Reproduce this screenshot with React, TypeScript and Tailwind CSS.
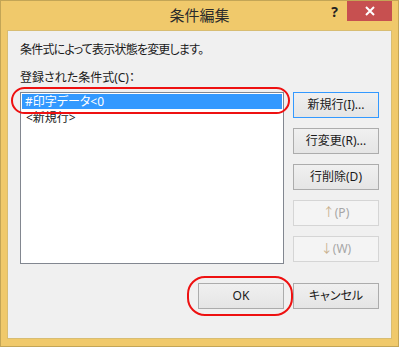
import React from "react";

const font = {
  fontFamily: '"Noto Sans", "Noto Sans CJK JP", sans-serif',
};

function Btn({
  children,
  focused,
  disabled,
  className = "",
}: {
  children: React.ReactNode;
  focused?: boolean;
  disabled?: boolean;
  className?: string;
}) {
  const border = focused
    ? "border-[#3399ff]"
    : disabled
    ? "border-[#d5d5d5]"
    : "border-[#acacac]";
  const bg = disabled
    ? "bg-[#f4f4f4]"
    : "bg-gradient-to-b from-[#f0f0f0] to-[#e5e5e5]";
  const color = disabled ? "text-[#a6a6a6]" : "text-[#1a1a1a]";
  return (
    <div
      className={`w-[86px] h-[26px] border ${border} ${bg} ${color} flex items-center justify-center text-[12px] leading-none ${className}`}
    >
      {children}
    </div>
  );
}

export default function App() {
  return (
    <div
      className="relative w-[399px] h-[347px] bg-[#f0c96b] border border-[#c3a556] flex flex-col [font-feature-settings:'palt']"
      style={font}
    >
      {/* title bar */}
      <div className="relative h-[29px] flex items-start">
        <div className="absolute inset-x-0 top-0 h-[29px] flex items-center justify-center text-[15px] text-[#2b2b2b]">
          条件編集
        </div>
        <div className="ml-auto flex items-start">
          <div className="mt-[4px] mr-[9px] text-[14px] font-bold text-[#222] leading-none">?</div>
          <div className="w-[45px] h-[20px] bg-[#c75050] mr-[6px] flex items-center justify-center">
            <svg width="10" height="10" viewBox="0 0 10 10">
              <path d="M1 1 L9 9 M9 1 L1 9" stroke="#fff" strokeWidth="2" />
            </svg>
          </div>
        </div>
      </div>
      {/* content */}
      <div className="mx-[6px] h-[309px] bg-[#f0f0f0] border border-[#d8bd72] flex flex-col pl-[12px] text-[12px] text-[#1a1a1a]">
        <div className="mt-[11px] h-[16px] leading-[16px] tracking-[-0.8px]">条件式によって表示状態を変更します。</div>
        <div className="mt-[12px] h-[16px] leading-[16px]">登録された条件式(C)：</div>
        <div className="mt-[6px] flex">
          <div className="w-[264px] h-[172px] bg-white border border-[#828790] p-[1px] flex flex-col">
            <div className="h-[15px] bg-[#3399ff] text-white pl-[3px] leading-[15px]">#印字データ&lt;0</div>
            <div className="h-[15px] pl-[4px] leading-[15px] mt-[1px]">&lt;新規行&gt;</div>
          </div>
          <div className="ml-[9px] flex flex-col gap-[10px]">
            <Btn focused>新規行(I)...</Btn>
            <Btn>行変更(R)...</Btn>
            <Btn>行削除(D)</Btn>
            <Btn disabled>
              <span className="text-[#c9b08c]">↑</span>(P)
            </Btn>
            <Btn disabled>
              <span className="text-[#c9b08c]">↓</span>(W)
            </Btn>
          </div>
        </div>
        <div className="mt-[19px] flex justify-end pr-[12px] gap-[9px]">
          <Btn className="h-[25px]">OK</Btn>
          <Btn className="h-[25px]">キャンセル</Btn>
        </div>
      </div>
      <div className="flex-1" />
      {/* annotations */}
      <div className="absolute left-[10px] top-[86px] w-[279px] h-[27px] rounded-full border-[2.5px] border-[#ee1111]" />
      <div className="absolute left-[186px] top-[275px] w-[106px] h-[40px] rounded-[18px] border-[2.5px] border-[#ee1111]" />
    </div>
  );
}
